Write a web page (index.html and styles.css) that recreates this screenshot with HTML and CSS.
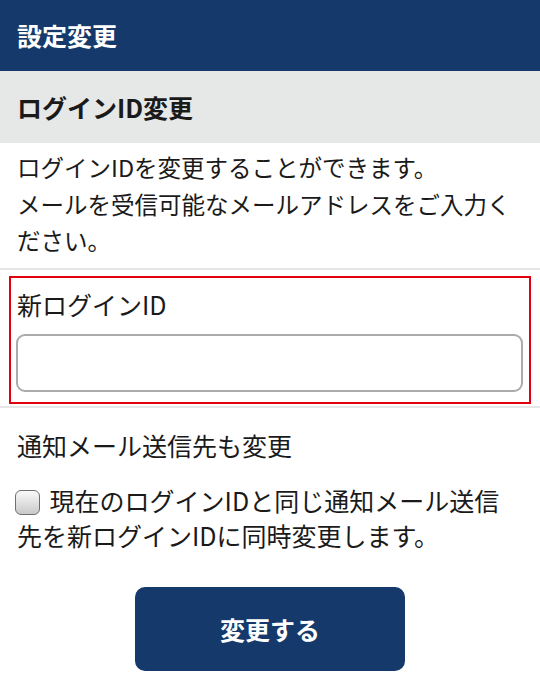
FILE: index.html
```html
<!DOCTYPE html>
<html lang="ja">
<head>
    <meta charset="UTF-8">
    <meta name="viewport" content="width=device-width, initial-scale=1.0">
    <title>設定変更</title>
    <link rel="stylesheet" href="styles.css">
</head>
<body>

<header class="app-header">設定変更</header>

<h2 class="section-title">ログインID変更</h2>

<p class="lead">
    ログインIDを変更することができます。<br>
    メールを受信可能なメールアドレスをご入力ください。
</p>

<div class="field-wrap">
    <div class="field-group">
        <label class="field-label" for="newId">新ログインID</label>
        <input type="text" id="newId" class="text-input">
    </div>
</div>

<div class="notify">
    <p class="notify-title">通知メール送信先も変更</p>
    <label class="check">
        <input type="checkbox" id="syncMail"> 現在のログインIDと同じ通知メール送信先を新ログインIDに同時変更します。
    </label>
</div>

<div class="actions">
    <button class="btn" type="button">変更する</button>
</div>

</body>
</html>
```

FILE: styles.css
```css
body {
    margin: 0;
    font-family: "Noto Sans CJK JP", "Noto Sans", sans-serif;
    color: #1a1a1a;
    background-color: #fff;
}

.app-header {
    height: 71px;
    line-height: 71px;
    padding: 0 17px;
    background-color: #14396a; /* Navy */
    color: #fff;
    font-size: 25px;
    font-weight: 700;
}

.section-title {
    margin: 0;
    height: 72px;
    line-height: 72px;
    padding: 0 17px;
    background-color: #e6e7e7;
    font-size: 25px;
    font-weight: 700;
}

.lead {
    margin: 0;
    padding: 6px 17px 9px;
    font-size: 23.5px;
    line-height: 36.5px;
}

/* New login ID */
.field-wrap {
    border-top: 2px solid #e6e6e6;
    border-bottom: 2px solid #e6e6e6;
    padding: 6px 9px 2px;
}

.field-group {
    border: 2px solid #e0000f;
    padding: 8px 6px 10px 5px;
}

.field-label {
    display: block;
    font-size: 25px;
    line-height: 1.5;
    margin-bottom: 11px;
    padding-left: 1px;
}

.text-input {
    display: block;
    box-sizing: border-box;
    width: 100%;
    height: 58px;
    border: 2px solid #ababab;
    border-radius: 9px;
    font-size: 23px;
    padding: 0 10px;
    background: #fff;
}

/* Notification mail */
.notify {
    padding: 19px 17px 0;
}

.notify-title {
    margin: 0 0 18px;
    font-size: 25px;
    line-height: 1.5;
}

.check {
    display: block;
    font-size: 25px;
    line-height: 1.4;
}

.check input[type="checkbox"] {
    appearance: none;
    -webkit-appearance: none;
    width: 25px;
    height: 25px;
    margin: 0 4px 0 -2px;
    vertical-align: -4px;
    border: 1.5px solid #6f6f6f;
    border-radius: 6px;
    background: linear-gradient(#fafafa, #c9c9c9);
    box-sizing: border-box;
}

.actions {
    display: flex;
    justify-content: center;
    padding: 34px 0 0;
}

.btn {
    width: 270px;
    height: 84px;
    border: none;
    border-radius: 10px;
    background-color: #14396a;
    color: #fff;
    font-family: inherit;
    font-size: 25px;
    font-weight: 700;
    cursor: pointer;
}
```
